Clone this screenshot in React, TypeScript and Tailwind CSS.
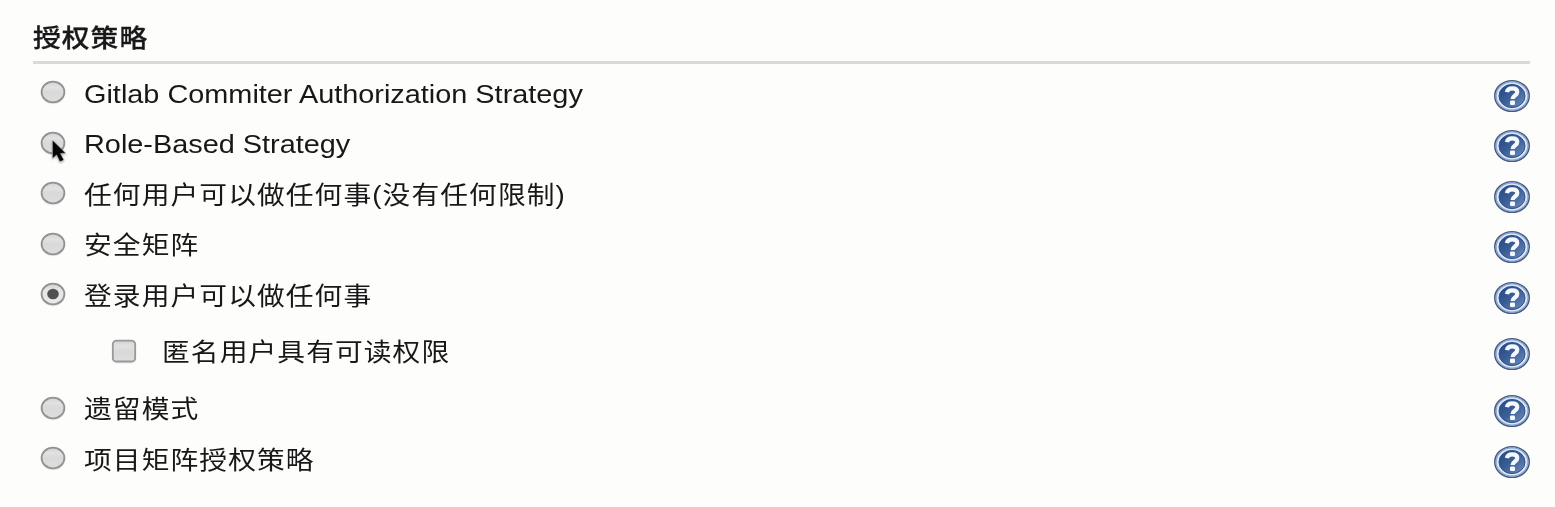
import React from "react";

type Option = { label: string; checked?: boolean; nested?: boolean; hovered?: boolean; latin?: boolean };

const options: Option[] = [
  { label: "Gitlab Commiter Authorization Strategy", latin: true },
  { label: "Role-Based Strategy", latin: true, hovered: true },
  { label: "任何用户可以做任何事(没有任何限制)" },
  { label: "安全矩阵" },
  { label: "登录用户可以做任何事", checked: true },
  { label: "匿名用户具有可读权限", nested: true },
  { label: "遗留模式" },
  { label: "项目矩阵授权策略" },
];

function Defs() {
  return (
    <svg className="absolute size-0" aria-hidden="true">
      <defs>
        <linearGradient id="control" x1="0" y1="0" x2="0" y2="1">
          <stop offset="0" stopColor="#d0d0d0" />
          <stop offset=".25" stopColor="#e2e2e2" />
          <stop offset=".5" stopColor="#d9d9d9" />
          <stop offset="1" stopColor="#dedede" />
        </linearGradient>
        <linearGradient id="checked" x1="0" y1="0" x2="0" y2="1">
          <stop offset="0" stopColor="#d0d0d0" />
          <stop offset=".3" stopColor="#e6e6e6" />
          <stop offset="1" stopColor="#e9e9e9" />
        </linearGradient>
        <linearGradient id="help" x1="0" y1="0" x2="1" y2="1">
          <stop offset="0" stopColor="#234780" />
          <stop offset=".5" stopColor="#3c5f96" />
          <stop offset="1" stopColor="#7290bf" />
        </linearGradient>
      </defs>
    </svg>
  );
}

function Radio({ checked }: { checked?: boolean }) {
  return (
    <svg width="26" height="25" viewBox="0 0 26 25" className="block">
      <ellipse cx="13" cy="13.2" rx="12.2" ry="11.2" fill="#000" opacity=".08" />
      <ellipse cx="13" cy="12" rx="11.4" ry="10.3" fill={checked ? "url(#checked)" : "url(#control)"} stroke="#929292" strokeWidth="1.8" />
      {checked && <ellipse cx="13" cy="12" rx="5.8" ry="5.2" fill="#505050" />}
    </svg>
  );
}

function Checkbox() {
  return (
    <svg width="26" height="25" viewBox="0 0 26 25" className="block">
      <rect x="1" y="2" width="24" height="22.4" rx="4" fill="#000" opacity=".07" />
      <rect x="1.8" y="1.7" width="22.4" height="20.8" rx="3.6" fill="url(#control)" stroke="#999" strokeWidth="1.8" />
    </svg>
  );
}

function HelpIcon() {
  return (
    <svg width="38" height="34" viewBox="0 0 38 34" className="block">
      <ellipse cx="19" cy="17" rx="17.2" ry="15.3" fill="#dce8fa" stroke="#4a5a7c" strokeWidth="1.6" />
      <ellipse cx="19" cy="17" rx="15.9" ry="14.1" fill="none" stroke="#86a5d6" strokeWidth="1.2" />
      <ellipse cx="19" cy="17" rx="13" ry="11.6" fill="url(#help)" stroke="#315287" strokeWidth="1" />
      <path d="M13.9 13.1C14.3 10.4 16.4 9.3 19.2 9.3c3.2 0 5.1 1.3 5.1 3.7 0 3.6-4.7 3.3-4.7 7" fill="none" stroke="#f5f8ff" strokeWidth="4.2" />
      <rect x="17" y="21.6" width="5" height="4.4" rx="1.2" fill="#f5f8ff" />
    </svg>
  );
}

function Cursor() {
  return (
    <svg width="18" height="26" viewBox="0 0 18 26" className="absolute left-[11px] top-[8px] drop-shadow-[0_1px_1px_rgba(0,0,0,0.35)]">
      <path d="M1.4 1v18.6l4.2-3.6 3.3 6.8 4-1.8-3.3-6.5 5.2-.3Z" fill="#050505" stroke="#d8d8d8" strokeWidth=".5" strokeLinejoin="round" />
    </svg>
  );
}

function OptionRow({ option }: { option: Option }) {
  const { label, checked, nested, hovered, latin } = option;
  return (
    <div className={`flex items-center ${nested ? "h-[63px] pl-[78px]" : "h-[50.5px] pl-[7px]"}`}>
      <label className="flex flex-1 items-center">
        <span className="relative -mt-[2px] shrink-0">
          {nested ? <Checkbox /> : <Radio checked={checked} />}
          {hovered && <Cursor />}
        </span>
        <span
          className={`block origin-left scale-x-[1.11] whitespace-nowrap leading-[36px] ${nested ? "ml-[25px]" : "ml-[18px]"} ${latin ? "text-[26px]" : "text-[25px] tracking-[0.97px]"}`}
        >
          {label}
        </span>
      </label>
      <span className="mt-[4px]">
        <HelpIcon />
      </span>
    </div>
  );
}

export default function App() {
  return (
    <main className="h-[507px] w-full overflow-hidden bg-[#fdfdfc] pl-[33px] pr-[24px] pt-[18px] font-['Liberation_Sans','Noto_Sans_CJK_SC',sans-serif] text-[#181818]">
      <Defs />
      <h2 className="mr-[1px] h-[46px] border-b-[3px] border-[#d9dad9]">
        <span className="block w-max origin-left scale-x-[1.11] pt-[1px] text-[25px] font-medium leading-[38px] tracking-[0.95px] [-webkit-text-stroke:0.3px_#181818]">授权策略</span>
      </h2>
      <div className="pt-[4.4px]">
        {options.map((option) => (
          <OptionRow key={option.label} option={option} />
        ))}
      </div>
    </main>
  );
}
